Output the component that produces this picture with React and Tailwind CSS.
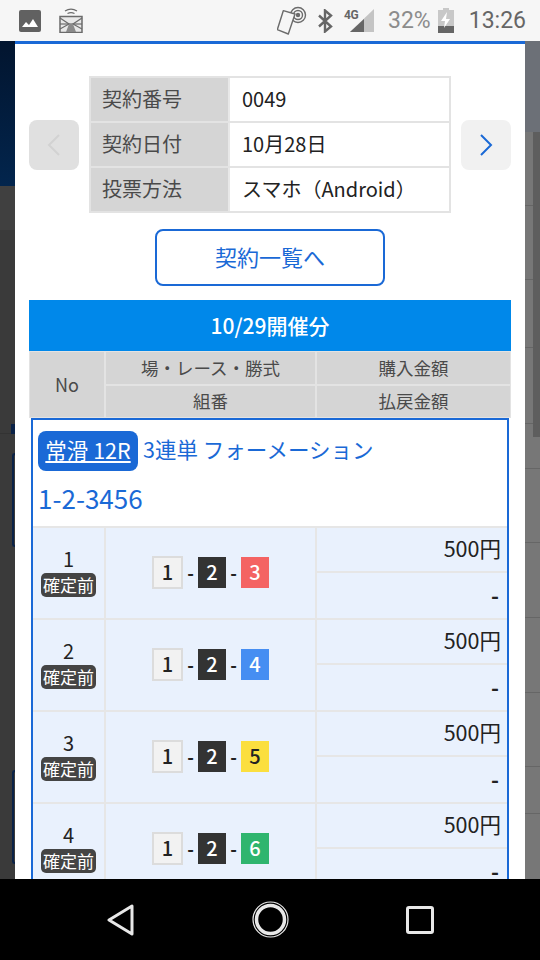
import React from 'react';

const cjk = { fontFamily: '"Noto Sans CJK JP", sans-serif' };

const StatusBar = () => (
    <div className="h-[41px] bg-[#f6f6f6] flex items-center pl-[19px] pr-[14px]">
        <svg width="22" height="22" viewBox="0 0 22 22">
            <rect width="22" height="22" rx="2" fill="#616161" />
            <path d="M3 17l4-5 3 3 4-6 5 8z" fill="#fff" />
        </svg>
        <svg className="ml-[18px] -mt-[1px]" width="24" height="25" viewBox="0 0 24 25" fill="none" stroke="#6b6b6b">
            <path d="M6 3c4-2.500 8-2.500 12 0M8.500 5.500c2.500-1.300 4.500-1.300 7 0" strokeWidth="1.200" />
            <rect x="1" y="8.500" width="22" height="16" strokeWidth="1.500" fill="#e8e8e8" />
            <path d="M1 16h22" strokeWidth="1.200" />
            <path d="M1 10l9 6-9 5M23 10l-9 6 9 5" strokeWidth="1.200" />
            <path d="M7 24l3-8h4l3 8z" fill="#8a8a8a" stroke="none" />
        </svg>
        <div className="flex-1" />
        <svg width="30" height="30" viewBox="0 0 30 30" fill="none" stroke="#6b6b6b" strokeWidth="1.400">
            <circle cx="21" cy="9" r="7.500" />
            <circle cx="21" cy="9" r="4.500" />
            <circle cx="21" cy="9" r="1.500" fill="#6b6b6b" />
            <path d="M6.300 4.700L18 8l-6.700 20L.3 23.700z" fill="#f6f6f6" strokeLinejoin="round" />
        </svg>
        <svg className="ml-[10px]" width="17" height="24" viewBox="0 0 17 24" fill="none" stroke="#666" strokeWidth="2.400">
            <path d="M2 6.500l12 11-6 5V1.500l6 5-12 11" />
        </svg>
        <div className="ml-[10px] relative w-[30px] h-[24px]">
            <svg className="absolute right-0 top-0" width="24" height="23" viewBox="0 0 24 23">
                <path d="M24 0v23H0z" fill="#c4c4c4" />
                <path d="M14 10v13H0z" fill="#666" />
            </svg>
            <span className="absolute left-0 top-0 text-[12px] leading-[12px] font-bold text-[#666] tracking-[-0.5px]" style={{ fontFamily: 'Roboto, sans-serif' }}>4G</span>
        </div>
        <span className="ml-[14px] text-[23px] leading-none text-[#8c8c8c]" style={{ fontFamily: 'Roboto, sans-serif' }}>32%</span>
        <svg className="ml-[7px]" width="16" height="25" viewBox="0 0 16 25">
            <path d="M5 0h6v2h5v23H0V2h5z" fill="#c8c8c8" />
            <path d="M0 18h16v7H0z" fill="#666" />
            <path d="M9 4L3 13h4l-1 7 6-9H8z" fill="#fff" />
        </svg>
        <span className="ml-[15px] text-[23px] leading-none text-[#666]" style={{ fontFamily: 'Roboto, sans-serif' }}>13:26</span>
    </div>
);

const LeftStrip = () => (
    <div className="w-[15px] shrink-0 flex flex-col bg-[#3a3a3a]">
        <div className="h-[145px] bg-gradient-to-b from-[#02152f] to-[#02254d]" />
        <div className="h-[44px] bg-[#404040]" />
        <div className="h-[204px] border-b border-[#333]" />
        <div className="h-[19px] flex justify-end"><div className="w-[4px] h-[10px] -mt-[10px] bg-[#0a2247]" /></div>
        <div className="ml-[12px] h-[94px] border-l-2 border-y-2 border-[#0a2247] rounded-l" />
        <div className="h-[223px]" />
        <div className="ml-[12px] h-[94px] border-l-2 border-y-2 border-[#0a2247] rounded-l" />
    </div>
);

const rightLines = ['h-[74px]', 'h-[74px]', 'h-[68px]', 'h-[76px]', 'h-[45px]', 'h-[74px]', 'h-[75px]', 'h-[75px]', 'h-[74px]', 'h-[47px]'];

const RightStrip = () => (
    <div className="w-[15px] shrink-0 relative flex flex-col bg-[#777777]">
        <div className="h-[91px] bg-[#6c7077]" />
        {rightLines.map((h, i) => (
            <div key={i} className={`${h} shrink-0 border-b border-[#666]`} />
        ))}
        <div className="absolute right-0 top-[91px] h-[305px] w-[7px] bg-[#5e5e5e]" />
    </div>
);

const InfoRow = ({ label, value, last }) => (
    <div className={`flex ${last ? 'flex-1' : 'h-[45px] border-b-2 border-[#e3e3e3]'}`}>
        <div className="w-[139px] shrink-0 bg-[#d5d5d5] border-r-2 border-[#e8e8e8] pl-[11px] pb-[2px] flex items-center text-[#4a4a4a]">{label}</div>
        <div className="flex-1 bg-white pl-[12px] pb-[2px] flex items-center text-[#222]">{value}</div>
    </div>
);

const Chevron = ({ d, color }) => (
    <svg width="14" height="22" viewBox="0 0 14 22" fill="none" stroke={color} strokeWidth="2">
        <path d={d} />
    </svg>
);

const Boat = ({ n, cls }) => (
    <span className={`w-[28px] h-[31px] flex items-center justify-center text-[20px] font-medium ${cls}`}>{n}</span>
);

const BetRow = ({ no, lastBoat, lastCls }) => (
    <div className="flex h-[92px] shrink-0 border-t-2 border-[#e6e6e6] bg-[#e9f1fd]">
        <div className="w-[73px] shrink-0 border-r-2 border-[#e6e6e6] flex flex-col items-center pt-[19px] text-[#222]">
            <span className="text-[20px] leading-[24px]">{no}</span>
            <span className="mt-[2px] px-[2px] rounded-[5px] bg-[#444] text-white text-[17px] leading-[24px]">確定前</span>
        </div>
        <div className="w-[211px] shrink-0 border-r-2 border-[#e6e6e6] flex items-center justify-center pb-[2px] text-[#222] text-[18px] font-bold">
            <span className="w-[31px] h-[33px] flex items-center justify-center bg-[#f2f2f2] border-2 border-[#dcdcdc] text-[20px] font-medium">1</span>
            <span className="w-[15px] text-center">-</span>
            <Boat n="2" cls="bg-[#333] text-white" />
            <span className="w-[15px] text-center">-</span>
            <Boat n={lastBoat} cls={lastCls} />
        </div>
        <div className="flex-1 flex flex-col text-[#222] text-[21.5px]">
            <div className="h-[45px] flex items-center justify-end pr-[6px] pb-[2px] border-b-2 border-[#e6e6e6]">500円</div>
            <div className="flex-1 flex items-center justify-end pr-[8px] font-bold">-</div>
        </div>
    </div>
);

const App = () => {
    return (
        <div className="w-[540px] h-[960px] overflow-hidden flex flex-col bg-black" style={cjk}>
            <StatusBar />
            <div className="h-[838px] flex overflow-hidden">
                <LeftStrip />
                <div className="w-[510px] shrink-0 bg-white border-t-[3px] border-[#1a69d6] px-[14px] flex flex-col">
                    <div className="flex items-center justify-between mt-[32px]">
                        <button className="w-[50px] h-[50px] rounded-[8px] bg-[#e0e0e0] flex items-center justify-center">
                            <Chevron d="M12 1L2 11l10 10" color="#d2d2d2" />
                        </button>
                        <div className="w-[362px] h-[137px] flex flex-col border-2 border-[#e3e3e3] text-[20px]">
                            <InfoRow label="契約番号" value="0049" />
                            <InfoRow label="契約日付" value="10月28日" />
                            <InfoRow label="投票方法" value="スマホ（Android）" last />
                        </div>
                        <button className="w-[50px] h-[50px] rounded-[8px] bg-[#f1f1f1] flex items-center justify-center">
                            <Chevron d="M2 1l10 10L2 21" color="#1a69d6" />
                        </button>
                    </div>
                    <button className="mx-auto mt-[16px] w-[230px] h-[57px] rounded-[8px] border-2 border-[#1a69d6] text-[#1a69d6] text-[22px] pb-[2px]">契約一覧へ</button>
                    <div className="mt-[14px] h-[51px] bg-[#0088ea] text-white text-[21px] font-medium flex items-center justify-center">10/29開催分</div>
                    <div className="flex h-[67px] bg-[#d5d5d5] text-[#4a4a4a] text-[17.5px] border border-[#e3e3e3]">
                        <div className="w-[76px] shrink-0 border-r-2 border-[#e3e3e3] flex items-center justify-center text-[18px]">No</div>
                        <div className="w-[211px] shrink-0 border-r-2 border-[#e3e3e3] flex flex-col">
                            <div className="flex-1 flex items-center justify-center border-b-2 border-[#e3e3e3]">場・レース・勝式</div>
                            <div className="flex-1 flex items-center justify-center">組番</div>
                        </div>
                        <div className="flex-1 flex flex-col">
                            <div className="flex-1 flex items-center justify-center border-b-2 border-[#e3e3e3]">購入金額</div>
                            <div className="flex-1 flex items-center justify-center">払戻金額</div>
                        </div>
                    </div>
                    <div className="mx-[2px] flex-1 min-h-0 flex flex-col border-x-2 border-t-2 border-[#1a69d6] overflow-hidden">
                        <div className="h-[106px] shrink-0 pl-[5px] pt-[11px] text-[#1a69d6] text-[21.5px]">
                            <div className="flex items-center h-[40px]">
                                <span className="h-[40px] w-[100px] rounded-[8px] bg-[#1a69d6] text-white underline flex items-center justify-center text-[21.5px] pb-[2px]">常滑 12R</span>
                                <span className="ml-[5px] -mt-[3px]">3連単 フォーメーション</span>
                            </div>
                            <div className="mt-[7px] text-[26px] leading-[40px]">1-2-3456</div>
                        </div>
                        <BetRow no="1" lastBoat="3" lastCls="bg-[#f46363] text-white" />
                        <BetRow no="2" lastBoat="4" lastCls="bg-[#468ef2] text-white" />
                        <BetRow no="3" lastBoat="5" lastCls="bg-[#fbdf3f] text-[#222]" />
                        <BetRow no="4" lastBoat="6" lastCls="bg-[#2fb56e] text-white" />
                    </div>
                </div>
                <RightStrip />
            </div>
            <div className="h-[81px] bg-black grid grid-cols-3 w-[450px] mx-auto items-center justify-items-center">
                <svg width="29" height="32" viewBox="0 0 29 32" fill="none" stroke="#e8e8e8" strokeWidth="3" strokeLinejoin="round">
                    <path d="M26 2v28L3 16z" />
                </svg>
                <svg width="37" height="37" viewBox="0 0 37 37" fill="none" stroke="#e8e8e8">
                    <circle cx="18.500" cy="18.500" r="17.500" strokeWidth="1.200" />
                    <circle cx="18.500" cy="18.500" r="14" strokeWidth="3.500" />
                </svg>
                <svg width="28" height="28" viewBox="0 0 28 28" fill="none" stroke="#e8e8e8" strokeWidth="3">
                    <rect x="1.500" y="1.500" width="25" height="25" rx="1.500" />
                </svg>
            </div>
        </div>
    );
};

export default App;
